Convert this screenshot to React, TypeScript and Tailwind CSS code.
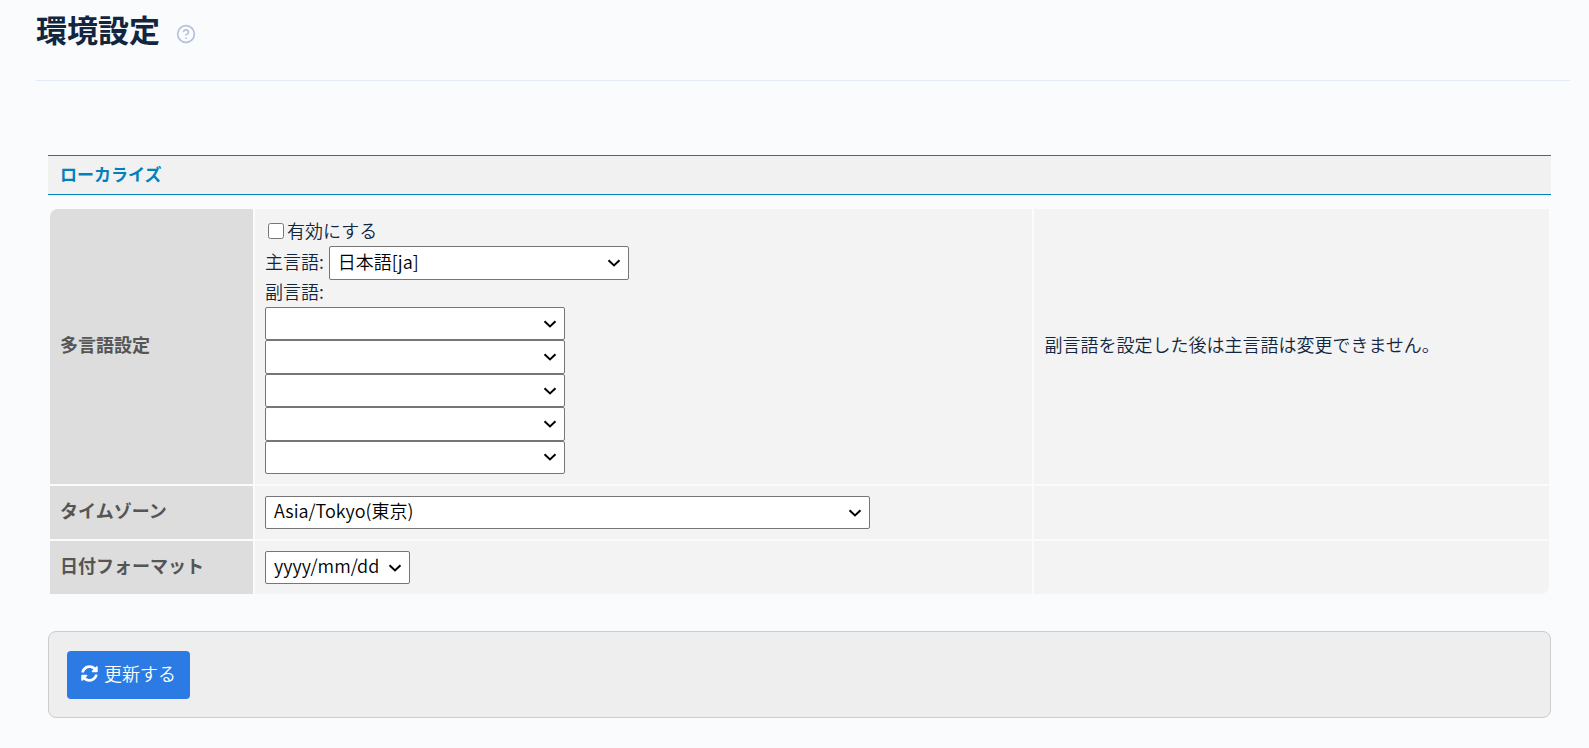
import { useState } from "react";
import type { ReactNode, SelectHTMLAttributes } from "react";
import { FaSyncAlt } from "react-icons/fa";

const SUB_LANGUAGES = [1, 2, 3, 4, 5];

const LANGUAGES = [
  { value: "ja", label: "日本語[ja]" },
  { value: "en", label: "English[en]" },
  { value: "zh", label: "中文[zh]" },
  { value: "ko", label: "한국어[ko]" },
];

// Native select with our own chevron laid over its right end
function Select({ className, ...props }: SelectHTMLAttributes<HTMLSelectElement>) {
  return (
    <div className={`relative ${className}`}>
      <select
        className="block size-full appearance-none rounded-[2px] border border-[#767676] bg-white pr-6 pb-1 pl-2 leading-[27px] text-black"
        {...props}
      />
      <svg
        className="pointer-events-none absolute inset-y-0 right-2 my-auto h-2 w-[14px]"
        viewBox="0 0 14 8"
        fill="none"
        stroke="#000"
        strokeWidth="2"
      >
        <path d="M1.5 1.2 7 6.4l5.5-5.2" />
      </svg>
    </div>
  );
}

function HelpIcon() {
  return (
    <svg
      className="size-5"
      viewBox="0 0 24 24"
      fill="none"
      stroke="currentColor"
      strokeWidth="2"
      strokeLinecap="round"
      strokeLinejoin="round"
    >
      <circle cx="12" cy="12" r="10" />
      <path d="M9.09 9a3 3 0 0 1 5.83 1c0 2-3 3-3 3" />
      <path d="M12 17h.01" />
    </svg>
  );
}

function Row({ title, thClass = "", note, noteClass = "", children }: {
  title: ReactNode;
  thClass?: string;
  note?: string;
  noteClass?: string;
  children: ReactNode;
}) {
  return (
    <tr>
      <th scope="row" className={`bg-[#ddd] px-[10px] pt-2 pb-3 text-left font-bold text-[#555] ${thClass}`}>
        {title}
      </th>
      <td className="bg-[#f3f3f3] p-[10px]">{children}</td>
      <td className={`bg-[#f3f3f3] px-[10px] pt-2 pb-3 ${noteClass}`}>{note}</td>
    </tr>
  );
}

export default function App() {
  const [multilingual, setMultilingual] = useState(false);

  return (
    <div className="min-h-screen bg-[#fafbfd] pr-[19px] pb-[30px] pl-9 font-['Noto_Sans_CJK_JP',sans-serif] text-lg leading-[27px] font-[350] text-[#12263f]">
      <header className="flex items-start gap-4 border-b border-[#e3ebf6] pt-[11px] pb-[33px]">
        <h1 className="text-[31px] leading-9 font-bold">環境設定</h1>
        <a href="#help" aria-label="ヘルプ" className="mt-[13px] text-[#b1c2d9]">
          <HelpIcon />
        </a>
      </header>

      <main className="mt-[74px] mr-[19px] ml-3">
        <h2 className="border-y border-[#0080bc] bg-[#f1f1f1] px-3 pt-[5px] pb-[7px] text-[17px] leading-[26px] font-bold text-[#0080bc]">
          ローカライズ
        </h2>

        <table className="mt-3 w-full table-fixed border-separate border-spacing-[2px]">
          <colgroup>
            <col className="w-[203px]" />
            <col className="w-[52%]" />
            <col />
          </colgroup>
          <tbody>
            <Row title="多言語設定" thClass="rounded-tl-lg" note="副言語を設定した後は主言語は変更できません。">
              <label className="flex items-center pb-1 leading-[23px]">
                <input
                  type="checkbox"
                  checked={multilingual}
                  onChange={(e) => setMultilingual(e.target.checked)}
                  className="mr-[3px] ml-[3px] size-4"
                />
                有効にする
              </label>
              <div className="flex items-center gap-[5px]">
                <label htmlFor="main-lang" className="pb-1">主言語:</label>
                <Select id="main-lang" className="h-[34px] w-[300px]" defaultValue="ja">
                  {LANGUAGES.map((l) => (
                    <option key={l.value} value={l.value}>{l.label}</option>
                  ))}
                </Select>
              </div>
              <div className="pb-1 leading-[23px]">副言語:</div>
              <div className="flex h-[167px] w-[300px] flex-col">
                {SUB_LANGUAGES.map((n) => (
                  <Select key={n} aria-label={`副言語 ${n}`} className="min-h-0 flex-1" defaultValue="">
                    <option value=""></option>
                    {LANGUAGES.map((l) => (
                      <option key={l.value} value={l.value}>{l.label}</option>
                    ))}
                  </Select>
                ))}
              </div>
            </Row>
            <Row title={<label htmlFor="timezone">タイムゾーン</label>}>
              <Select id="timezone" className="h-[33px] w-[605px]">
                <option>Asia/Tokyo(東京)</option>
                <option>America/New_York(ニューヨーク)</option>
                <option>Europe/London(ロンドン)</option>
              </Select>
            </Row>
            <Row title={<label htmlFor="date-format">日付フォーマット</label>} noteClass="rounded-br-lg">
              <Select id="date-format" className="h-[33px] w-[145px]">
                <option>yyyy/mm/dd</option>
                <option>mm/dd/yyyy</option>
                <option>dd/mm/yyyy</option>
              </Select>
            </Row>
          </tbody>
        </table>

        <div className="mt-[35px] rounded-lg border border-[#ccc] bg-[#eee] px-[18px] pt-[19px] pb-[18px]">
          <button
            type="button"
            className="flex h-12 items-center gap-[6px] rounded-[4px] bg-[#2c7be5] px-[14px] pb-1 text-white"
          >
            <FaSyncAlt className="size-[17px]" />
            更新する
          </button>
        </div>
      </main>
    </div>
  );
}
